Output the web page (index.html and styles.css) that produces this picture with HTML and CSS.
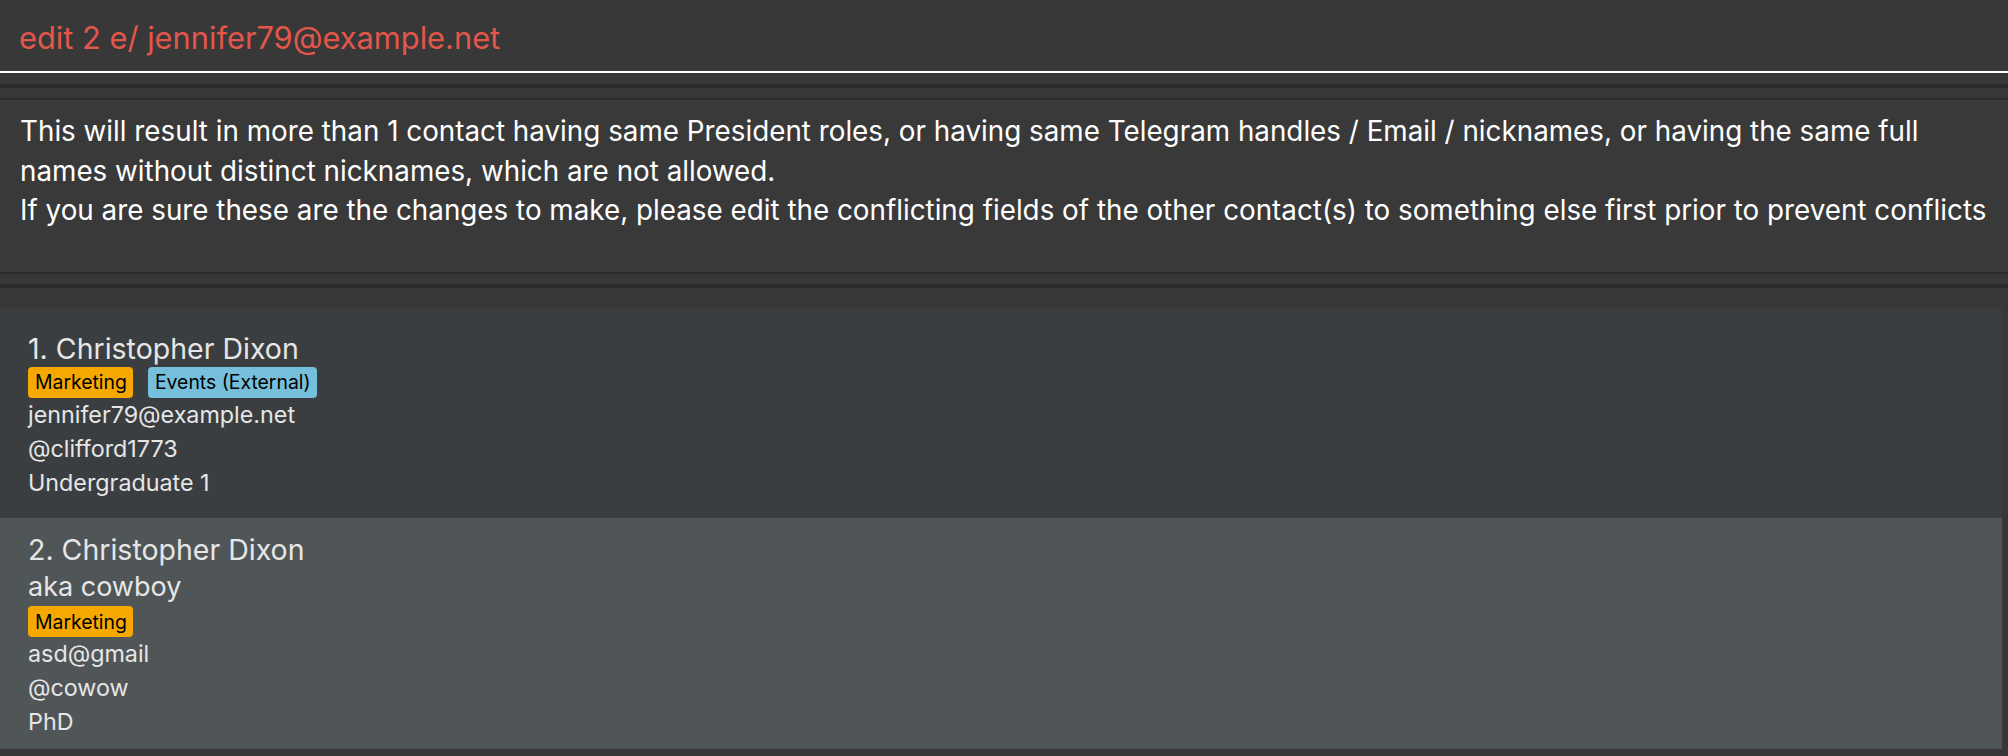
FILE: index.html
```html
<!DOCTYPE html>
<html lang="en">
<head>
<meta charset="utf-8">
<title>Contacts</title>
<link rel="stylesheet" href="styles.css">
</head>
<body>
<div class="app">
  <div class="command-box">
    <span class="command-text">edit 2 e/ jennifer79@example.net</span>
  </div>
  <div class="result-section">
    <div class="result-frame">
      <div class="result-display">
        <p class="result-text">This will result in more than 1 contact having same President roles, or having same Telegram handles / Email / nicknames, or having the same full<br>names without distinct nicknames, which are not allowed.<br>If you are sure these are the changes to make, please edit the conflicting fields of the other contact(s) to something else first prior to prevent conflicts</p>
      </div>
    </div>
  </div>
  <div class="list-pane">
    <div class="card card-odd">
      <div class="card-name">1. Christopher Dixon</div>
      <div class="tags">
        <span class="tag tag-marketing">Marketing</span>
        <span class="tag tag-events">Events (External)</span>
      </div>
      <div class="card-line">jennifer79@example.net</div>
      <div class="card-line">@clifford1773</div>
      <div class="card-line">Undergraduate 1</div>
    </div>
    <div class="card card-even">
      <div class="card-name">2. Christopher Dixon</div>
      <div class="card-nick">aka cowboy</div>
      <div class="tags">
        <span class="tag tag-marketing">Marketing</span>
      </div>
      <div class="card-line">asd@gmail</div>
      <div class="card-line">@cowow</div>
      <div class="card-line">PhD</div>
    </div>
  </div>
</div>
</body>
</html>
```

FILE: styles.css
```css
* {
  box-sizing: border-box;
}

html, body {
  margin: 0;
  padding: 0;
  background: #383838;
}

body {
  font-family: "Inter", "Roboto", sans-serif;
  width: 2008px;
  height: 756px;
  overflow: hidden;
}

.app {
  display: flex;
  flex-direction: column;
  width: 2008px;
}

.command-box {
  height: 73px;
  background: #383838;
  border-bottom: 2px solid #ffffff;
  padding: 18px 0 0 19px;
}

.command-text {
  display: block;
  color: #e2574a;
  font-size: 30.8px;
  line-height: 40px;
}

.result-section {
  padding-top: 11px;
  background: #373737;
}

.result-frame {
  border-top: 4px solid #2b2b2b;
  border-bottom: 4px solid #2b2b2b;
  padding: 10px 0;
}

.result-display {
  height: 176px;
  border-top: 2px solid #2b2b2b;
  border-bottom: 2px solid #2b2b2b;
  background: #393939;
  padding: 12px 0 0 20px;
}

.result-text {
  margin: 0;
  color: #ffffff;
  font-size: 27.8px;
  line-height: 39.5px;
  white-space: nowrap;
}

.list-pane {
  padding: 20px 6px 7px 0;
  display: flex;
  flex-direction: column;
}

.card {
  display: flex;
  flex-direction: column;
  justify-content: center;
  min-height: 210px;
  padding: 13px 28px 10px 28px;
  color: #e6e6e6;
}

.card-odd {
  background: #3b3e40;
}

.card-even {
  background: #505558;
}

.card-name,
.card-nick {
  font-size: 28.5px;
  line-height: 37px;
}

.card-nick {
  font-size: 27px;
  margin-bottom: 1px;
}

.tags {
  display: flex;
  gap: 15px;
  height: 31px;
}

.tag {
  display: inline-flex;
  align-items: center;
  height: 31px;
  padding: 0 6px 0 7px;
  border-radius: 4px;
  color: #000000;
  font-size: 19.4px;
}

.tag-marketing {
  background: #f5a800;
}

.tag-events {
  background: #75bfdb;
}

.card-line {
  font-size: 23.3px;
  line-height: 34px;
}
```
